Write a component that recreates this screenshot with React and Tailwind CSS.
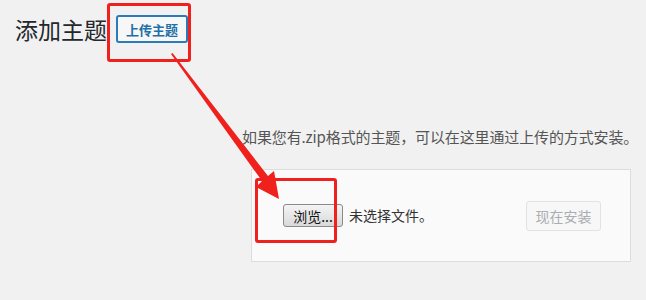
import React from "react";

const font = { fontFamily: '"Noto Sans CJK SC", "Noto Sans", sans-serif' };

export default function App() {
  return (
    <div
      className="relative w-[646px] h-[300px] overflow-hidden bg-[#f1f1f1] text-[#23282d]"
      style={font}
    >
      {/* header */}
      <div className="flex items-center pl-[15px] pt-[15px] h-[43px]">
        <h1 className="text-[23px] leading-[28px] font-normal text-[#23282d]">添加主题</h1>
        <button className="ml-[9px] h-[28px] w-[72px] rounded-[3px] border-2 border-[#2a7bb8] bg-[#f7f7f7] text-[13px] leading-none font-bold text-[#1f6fa8]">
          上传主题
        </button>
      </div>

      {/* description */}
      <p className="mt-[84px] ml-[242px] text-[15px] leading-[20px] tracking-[-0.12px] text-[#555] whitespace-nowrap">
        如果您有.zip格式的主题，可以在这里通过上传的方式安装。
      </p>

      {/* upload panel */}
      <div className="mt-[22px] ml-[251px] w-[380px] h-[93px] border border-[#ddd] bg-[#fafafa] flex items-center justify-between pl-[31px] pr-[29px]">
        <div className="flex items-center">
          <button className="h-[23px] w-[60px] rounded-[3px] border border-[#8a8a8a] bg-gradient-to-b from-[#f4f4f4] to-[#d9d9d9] text-[14px] leading-none text-[#111]">
            浏览...
          </button>
          <span className="ml-[6px] text-[14px] text-[#333]">未选择文件。</span>
        </div>
        <button className="h-[30px] w-[75px] rounded-[3px] border border-[#e2e2e2] bg-[#f7f7f7] text-[14px] leading-none text-[#a9adb1]">
          现在安装
        </button>
      </div>

      {/* annotations */}
      <div className="absolute left-[107px] top-[3px] w-[84px] h-[59px] border-[3px] border-[#f0201c] rounded-[3px]" />
      <div className="absolute left-[255px] top-[178px] w-[82px] h-[65px] border-[3px] border-[#f0201c] rounded-[3px]" />
      <svg className="absolute left-0 top-0" width="646" height="300" viewBox="0 0 646 300">
        <polygon
          points="171,54 172.5,53 268,176 274,171 279,199 256,187 262,181"
          fill="#f0201c"
        />
      </svg>
    </div>
  );
}
